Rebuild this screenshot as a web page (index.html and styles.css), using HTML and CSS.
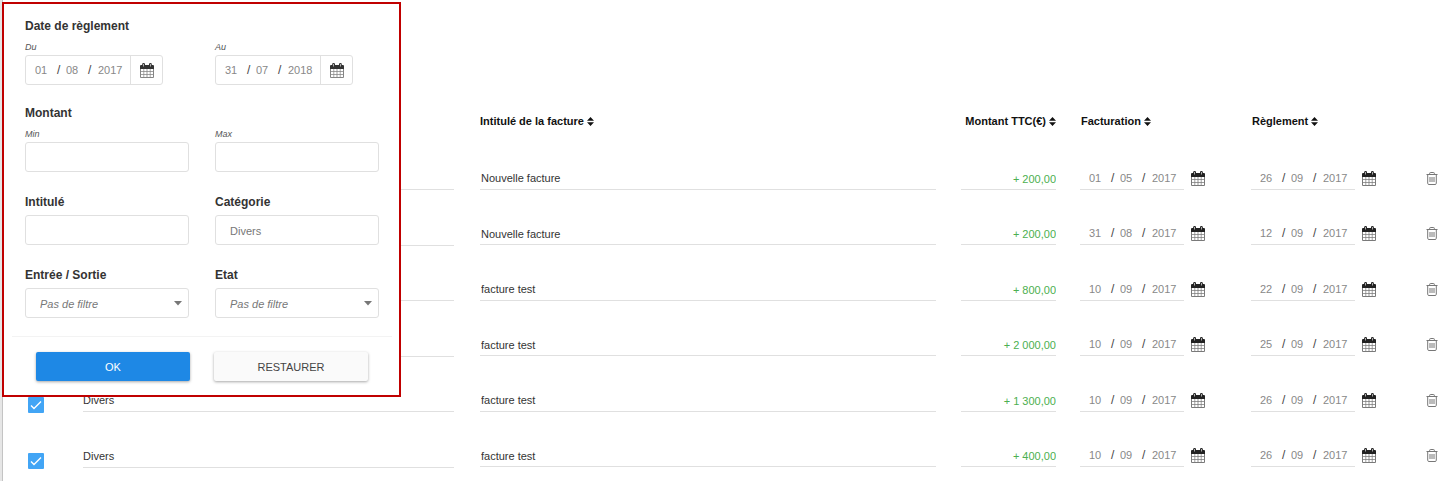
FILE: index.html
```html
<!DOCTYPE html>
<html lang="fr">
<head>
<meta charset="utf-8">
<title>Factures</title>
<link rel="stylesheet" href="styles.css">
</head>
<body>
<svg class="defs" aria-hidden="true">
  <symbol id="calendar" viewBox="0 0 14 15">
    <path d="M0 3h14v11a1 1 0 0 1-1 1H1a1 1 0 0 1-1-1z" fill="currentColor" opacity=".6"/>
    <path d="M0 3a1 1 0 0 1 1-1h12a1 1 0 0 1 1 1v3H0z" fill="currentColor"/>
    <path d="M1 6h2.5v2.3H1zM4.2 6h2.4v2.3H4.2zM7.4 6h2.4v2.3H7.4zM10.5 6H13v2.3h-2.5zM1 9h2.5v2.2H1zM4.2 9h2.4v2.2H4.2zM7.4 9h2.4v2.2H7.4zM10.5 9H13v2.2h-2.5zM1 11.9h2.5V14H1zM4.2 11.9h2.4V14H4.2zM7.4 11.9h2.4V14H7.4zM10.5 11.9H13V14h-2.5z" fill="#fff"/>
    <rect x="2.2" y="0" width="2.8" height="4.4" rx="1.3" fill="currentColor"/>
    <rect x="9" y="0" width="2.8" height="4.4" rx="1.3" fill="currentColor"/>
    <path d="M3.2 1h.8v2.5h-.8zM10 1h.8v2.5H10z" fill="#ccc"/>
  </symbol>
  <symbol id="sort" viewBox="0 0 7 9">
    <path d="M3.5 0 7 3.8H0zM3.5 9 0 5.2h7z" fill="currentColor"/>
  </symbol>
  <symbol id="trash" viewBox="0 0 12 13">
    <path d="M.5 2.5h11M3.7 2.3V1.2q0-.7.7-.7h3.2q.7 0 .7.7v1.1M1.7 2.8v8.5q0 1.2 1.2 1.2h6.2q1.2 0 1.2-1.2V2.8M4 5v5M6 5v5M8 5v5" fill="none" stroke="currentColor"/>
  </symbol>
</svg>

<main class="page">
  <table class="invoices">
    <colgroup>
      <col class="col-check"><col class="col-category"><col><col class="col-amount"><col class="col-date"><col class="col-date"><col class="col-delete">
    </colgroup>
    <thead>
      <tr>
        <th></th>
        <th></th>
        <th><button class="sort">Intitulé de la facture <svg><use href="#sort"/></svg></button></th>
        <th class="amount-head"><button class="sort">Montant TTC(€) <svg><use href="#sort"/></svg></button></th>
        <th><button class="sort indent">Facturation <svg><use href="#sort"/></svg></button></th>
        <th><button class="sort indent">Règlement <svg><use href="#sort"/></svg></button></th>
        <th></th>
      </tr>
    </thead>
    <tbody id="rows"></tbody>
  </table>
</main>

<form class="filters">
  <div class="fields">
    <fieldset class="group">
      <legend>Date de règlement</legend>
      <div class="pair">
        <div><label class="hint" for="from-day">Du</label><div class="date-box" data-date="01/08/2017" data-id="from"></div></div>
        <div><label class="hint" for="to-day">Au</label><div class="date-box" data-date="31/07/2018" data-id="to"></div></div>
      </div>
    </fieldset>
    <fieldset class="group">
      <legend>Montant</legend>
      <div class="pair">
        <div><label class="hint" for="min">Min</label><input class="box" id="min" type="text"></div>
        <div><label class="hint" for="max">Max</label><input class="box" id="max" type="text"></div>
      </div>
    </fieldset>
    <div class="pair">
      <div><label class="title" for="name">Intitulé</label><input class="box" id="name" type="text"></div>
      <div><label class="title" for="category">Catégorie</label><input class="box" id="category" type="text" value="Divers"></div>
    </div>
    <div class="pair">
      <div><label class="title" for="flow">Entrée / Sortie</label><select class="box" id="flow"><option>Pas de filtre</option></select></div>
      <div><label class="title" for="state">Etat</label><select class="box" id="state"><option>Pas de filtre</option></select></div>
    </div>
  </div>
  <div class="actions">
    <button class="btn primary" type="button">OK</button>
    <button class="btn" type="button">RESTAURER</button>
  </div>
</form>
<script src="app.js"></script>
</body>
</html>
```

FILE: styles.css
```css
* { box-sizing: border-box; }

body {
  margin: 0;
  background: #fff;
  color: #333;
  font: 11px/16px "Liberation Sans", Arial, sans-serif;
  overflow: hidden;
}

button, input, select { font: inherit; color: inherit; }
button { padding: 0; border: 0; background: none; cursor: pointer; }

.defs { position: absolute; width: 0; height: 0; }

.page {
  min-height: 100vh;
  padding: 91px 0 0 1px;
  border-left: 2px solid #e6e6e6;
  box-shadow: inset 1px 0 #c4c4c4;
}

/* Invoice list */
.invoices { width: 100%; table-layout: fixed; border-collapse: collapse; }
.col-check { width: 80px; }
.col-category { width: 27.38%; }
.col-amount { width: 119px; }
.col-date { width: 171px; }
.col-delete { width: 31px; }
.invoices th { height: 59px; padding: 1px 0 0; text-align: left; color: #111; }
.invoices td { height: 56px; padding: 0; }
.invoices tr:nth-child(even) td { height: 55px; }
.invoices .amount-head { padding-right: 24px; text-align: right; }

.sort { display: inline-flex; align-items: center; gap: 3px; font-weight: bold; white-space: nowrap; }
.sort svg { width: 7px; height: 9px; }
.sort.indent { padding-left: 1px; }

.line {
  display: block;
  width: 100%;
  height: 23px;
  padding: 1px 0 0 1px;
  border: 0;
  border-bottom: 1px solid #e0e0e0;
  background: none;
}
.invoices .cell-category { padding: 1px 26px 0 0; }
.cell-category .line { padding: 0; }
.invoices .cell-title { padding-right: 25px; }
.invoices .cell-amount { padding-right: 24px; }
.cell-amount .line { padding: 2px 0 0; color: #4caf50; text-align: right; }
.invoices .cell-check { padding: 10px 0 0 25px; }

.check {
  display: block;
  width: 16px;
  height: 16px;
  margin: 0;
  appearance: none;
  border-radius: 1px;
  background: #42a5f5 url("data:image/svg+xml,%3Csvg xmlns='http://www.w3.org/2000/svg' viewBox='0 0 16 16'%3E%3Cpath d='M3 8.5l3 3 7-7' fill='none' stroke='%23fff' stroke-width='1.4'/%3E%3C/svg%3E");
}

.date-line { display: flex; align-items: center; gap: 7px; }
.date { display: flex; align-items: center; width: 104px; height: 23px; color: #444; font-size: 12px; }
.date-line .date { border-bottom: 1px solid #e0e0e0; }
.date input { width: 27px; padding: 0 0 0 5px; border: 0; background: none; color: #888; font-size: 11px; }
.date .day { width: 31px; padding-left: 9px; }
.date .year { width: 37px; padding-left: 6px; }
.date span { width: 4px; }
.calendar { display: flex; align-items: center; justify-content: center; color: #222; }
.calendar svg { width: 14px; height: 15px; }
.delete { display: block; margin-left: 4px; color: #777; }
.delete svg { display: block; width: 12px; height: 13px; }

/* Filter panel */
.filters {
  position: absolute;
  top: 2px;
  left: 2px;
  width: 399px;
  border: 2px solid #c00000;
  background: #fff;
}
.fields { display: flex; flex-direction: column; gap: 20px; padding: 14px 20px 0 21px; }
.group { min-width: 0; margin: 0; padding: 0; border: 0; }
.group legend, .title { display: block; padding: 0; font-size: 12px; font-weight: bold; line-height: 16px; }
.group legend { margin-bottom: 7px; }
.title { padding-top: 2px; margin-bottom: 5px; }
.pair { display: grid; grid-template-columns: 1fr 1fr; gap: 26px; }
.hint { display: block; margin-bottom: 2px; font-size: 9px; font-style: italic; line-height: 12px; color: #555; }

.box {
  display: block;
  width: 100%;
  height: 30px;
  padding: 2px 14px 0;
  border: 1px solid #e0e0e0;
  border-radius: 3px;
  background: #fff;
  color: #777;
}
select.box {
  appearance: none;
  font-style: italic;
  background: #fff url("data:image/svg+xml,%3Csvg xmlns='http://www.w3.org/2000/svg' viewBox='0 0 8 5'%3E%3Cpath d='M0 0h8L4 4.5z' fill='%23777'/%3E%3C/svg%3E") no-repeat right 6px center / 8px 5px;
}
.date-box { display: flex; width: 138px; height: 30px; border: 1px solid #e0e0e0; border-radius: 3px; }
.date-box .date { height: 28px; }
.date-box .calendar { flex: 1; border-left: 1px solid #e0e0e0; color: #333; }

.actions {
  display: flex;
  gap: 24px;
  margin: 18px 7px 0 8px;
  padding: 15px 24px 14px;
  border-top: 1px solid #f3f3f3;
}
.btn {
  flex: 1;
  height: 29px;
  border-radius: 2px;
  background: #fafafa;
  color: #444;
  box-shadow: 0 1px 3px rgba(0, 0, 0, .35);
}
.btn.primary { background: #1e88e5; color: #fff; }
```

FILE: app.js
```js
const rows = [
  ["", "Nouvelle facture", "+ 200,00", "01/05/2017", "26/09/2017"],
  ["", "Nouvelle facture", "+ 200,00", "31/08/2017", "12/09/2017"],
  ["", "facture test", "+ 800,00", "10/09/2017", "22/09/2017"],
  ["", "facture test", "+ 2 000,00", "10/09/2017", "25/09/2017"],
  ["Divers", "facture test", "+ 1 300,00", "10/09/2017", "26/09/2017"],
  ["Divers", "facture test", "+ 400,00", "10/09/2017", "26/09/2017"]
];

const calendar = '<button type="button" class="calendar" aria-label="Calendrier"><svg><use href="#calendar"/></svg></button>';

function dateField(value, id) {
  const [d, m, y] = value.split("/");
  return `<div class="date">
    <input class="day" id="${id}-day" aria-label="Jour" value="${d}"><span>/</span>
    <input aria-label="Mois" value="${m}"><span>/</span>
    <input class="year" aria-label="Année" value="${y}"></div>${calendar}`;
}

document.getElementById("rows").innerHTML = rows.map(([cat, title, amount, billed, paid], i) => `<tr>
  <td class="cell-check"><input type="checkbox" class="check" aria-label="Sélectionner" checked></td>
  <td class="cell-category"><input class="line" aria-label="Catégorie" value="${cat}"></td>
  <td class="cell-title"><input class="line" aria-label="Intitulé" value="${title}"></td>
  <td class="cell-amount"><input class="line" aria-label="Montant" value="${amount}"></td>
  <td><div class="date-line">${dateField(billed, "billed" + i)}</div></td>
  <td><div class="date-line">${dateField(paid, "paid" + i)}</div></td>
  <td><button class="delete" aria-label="Supprimer"><svg><use href="#trash"/></svg></button></td>
</tr>`).join("");

document.querySelectorAll(".date-box").forEach(box => {
  box.innerHTML = dateField(box.dataset.date, box.dataset.id);
});
```
